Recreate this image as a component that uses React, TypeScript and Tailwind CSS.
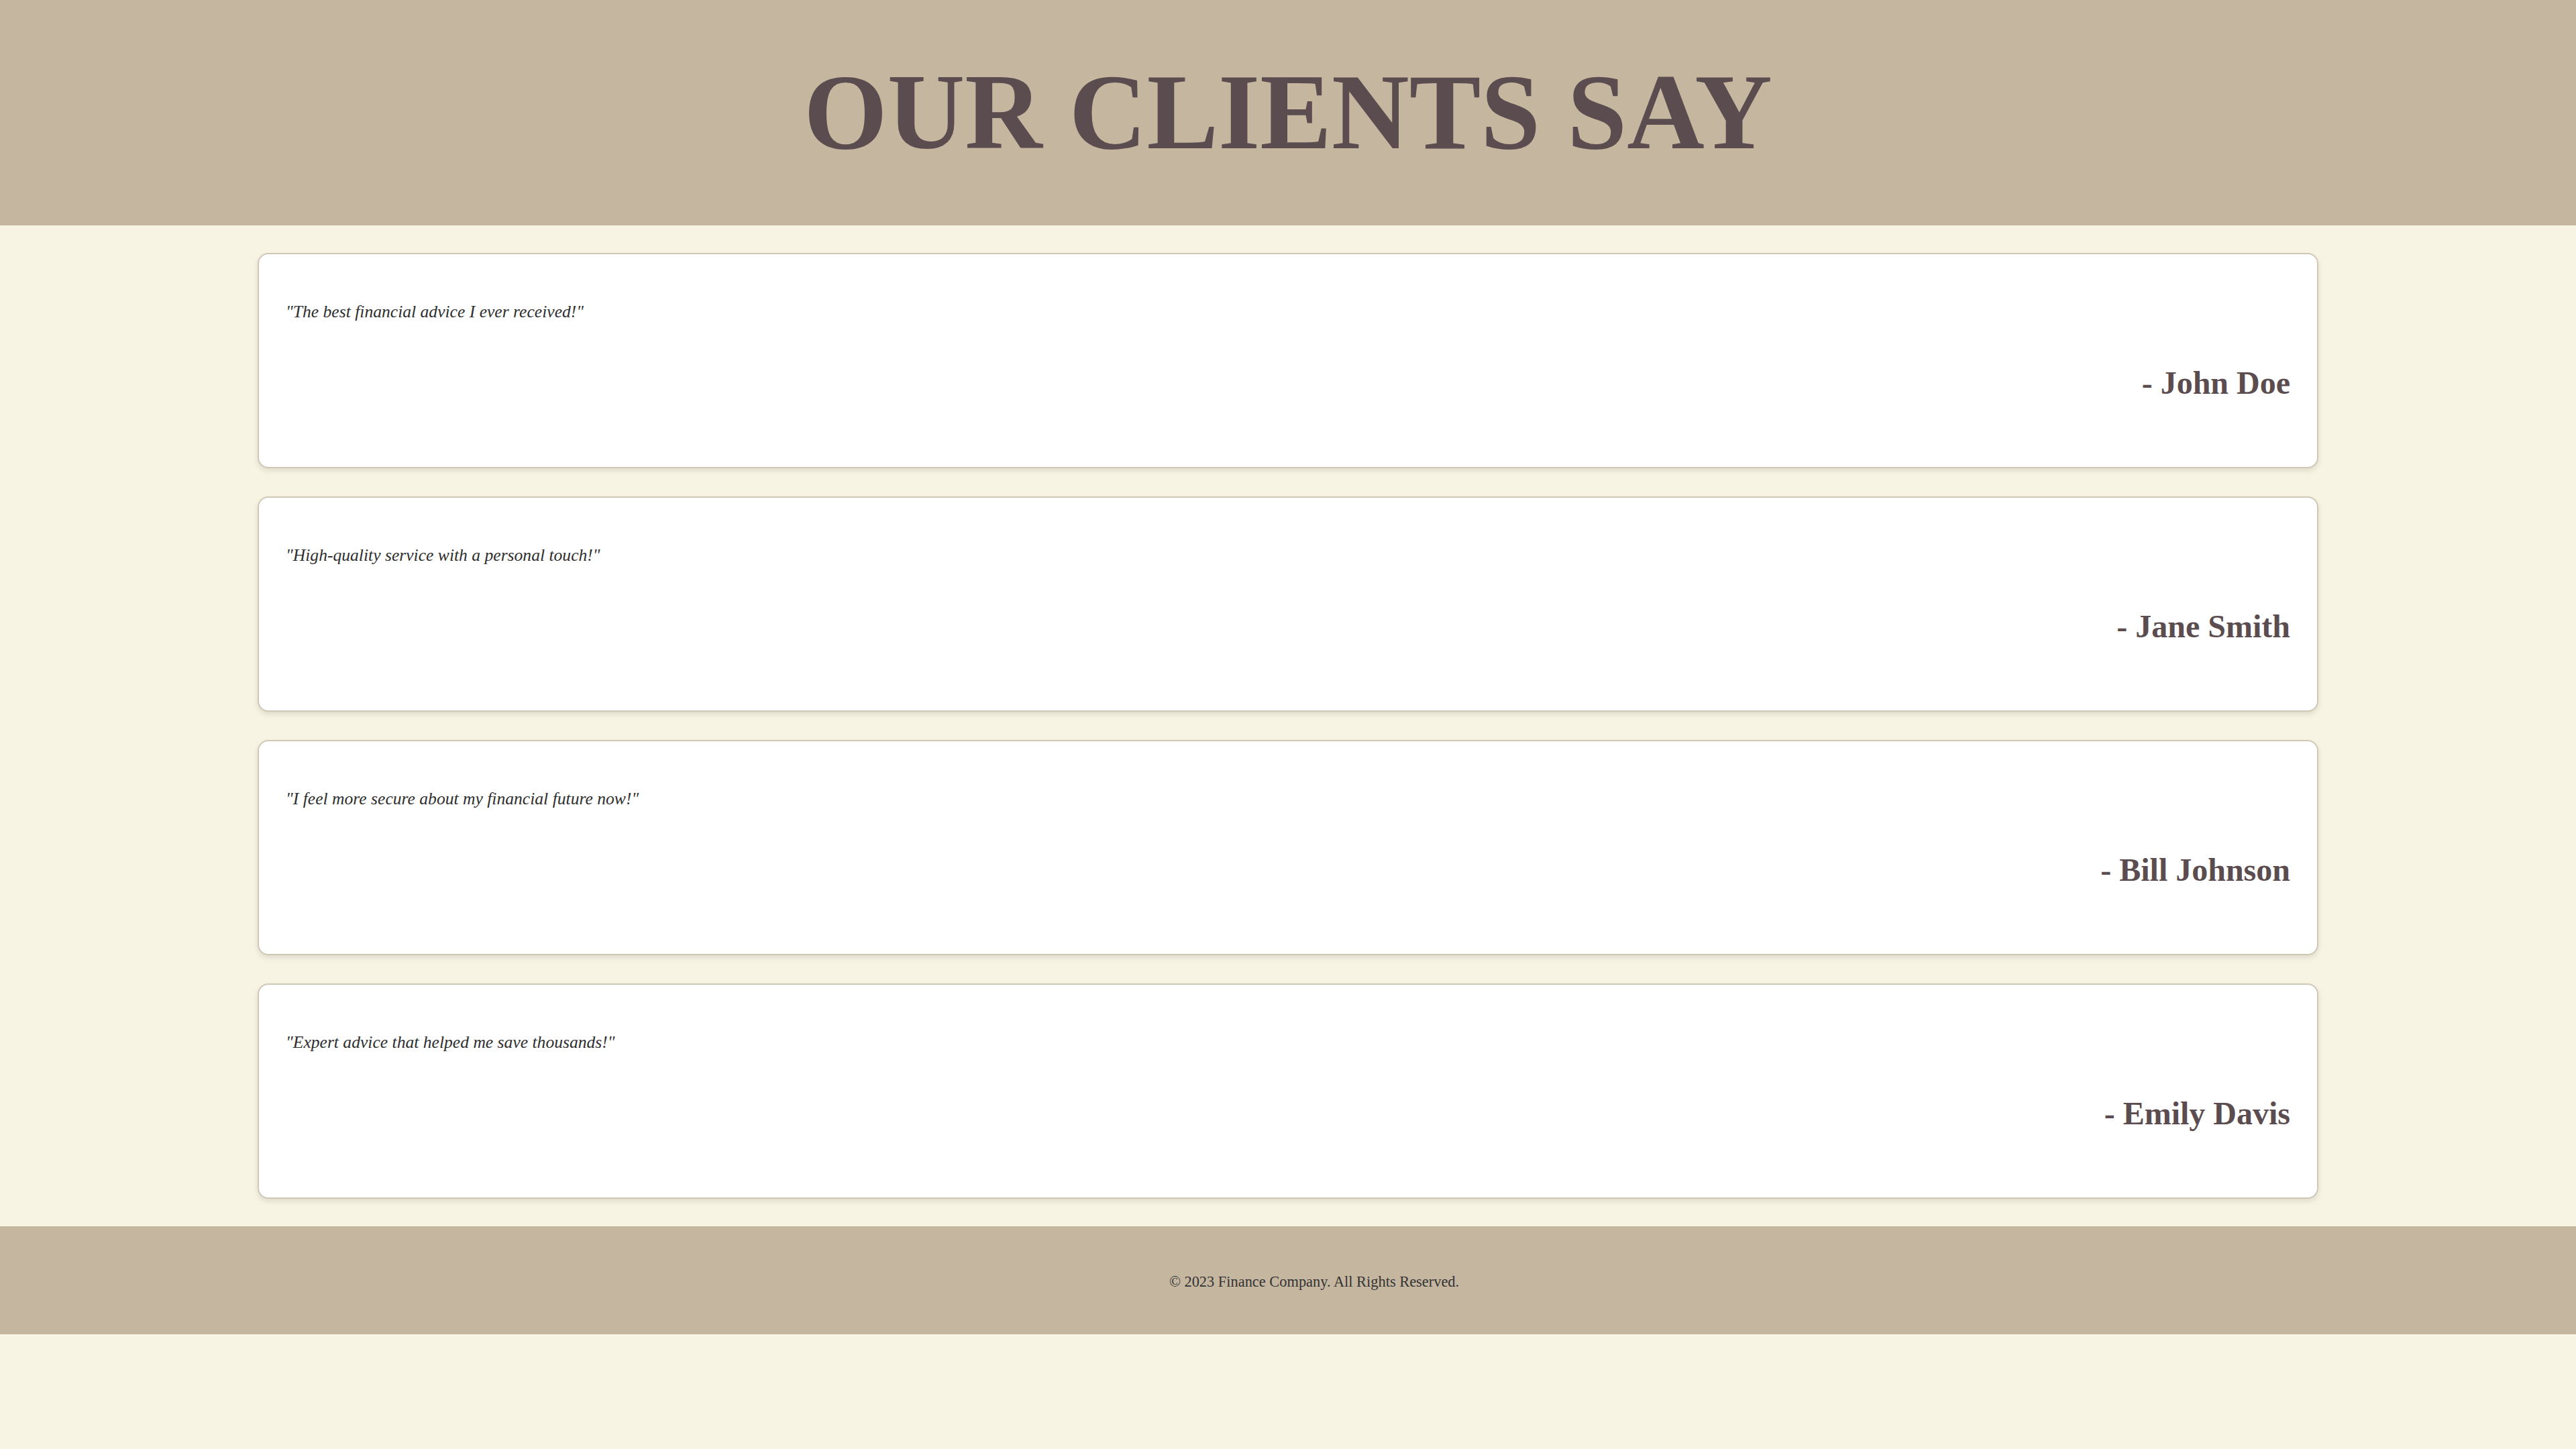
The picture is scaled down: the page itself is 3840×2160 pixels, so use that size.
import React from "react";

const testimonials = [
  { quote: "\"The best financial advice I ever received!\"", name: "- John Doe" },
  { quote: "\"High-quality service with a personal touch!\"", name: "- Jane Smith" },
  { quote: "\"I feel more secure about my financial future now!\"", name: "- Bill Johnson" },
  { quote: "\"Expert advice that helped me save thousands!\"", name: "- Emily Davis" },
];

const App: React.FC = () => {
  return (
    <div className="min-h-[2160px] bg-[#f7f4e4] font-['Liberation_Serif','Times_New_Roman',serif]">
      <header className="bg-[#c5b6a0] pt-[79px] pb-[80px] text-center">
        <h1 className="text-[160px] leading-[177px] font-bold text-[#5b4d4f]">OUR CLIENTS SAY</h1>
      </header>

      <main className="py-[41px] flex flex-col items-center gap-[42px]">
        {testimonials.map((t) => (
          <div
            key={t.name}
            className="w-[80%] h-[321px] bg-white border-2 border-[#d0c8b6] rounded-[16px] shadow-[0_4px_8px_rgba(0,0,0,0.1)] px-[40px] pt-[40px] flex flex-col"
          >
            <p className="mt-[31px] text-[25.6px] leading-[30px] italic text-[#2e2e2e]">{t.quote}</p>
            <p className="mt-[63px] text-right text-[48px] leading-[56px] font-bold text-[#5b4d4f]">
              {t.name}
            </p>
          </div>
        ))}
      </main>

      <footer className="bg-[#c5b6a0] h-[161px] flex items-center justify-center pl-[78px]">
        <p className="text-[22.4px] leading-[26px] text-[#333] mt-[4px]">
          © 2023 Finance Company. All Rights Reserved.
        </p>
      </footer>
    </div>
  );
};

export default App;
